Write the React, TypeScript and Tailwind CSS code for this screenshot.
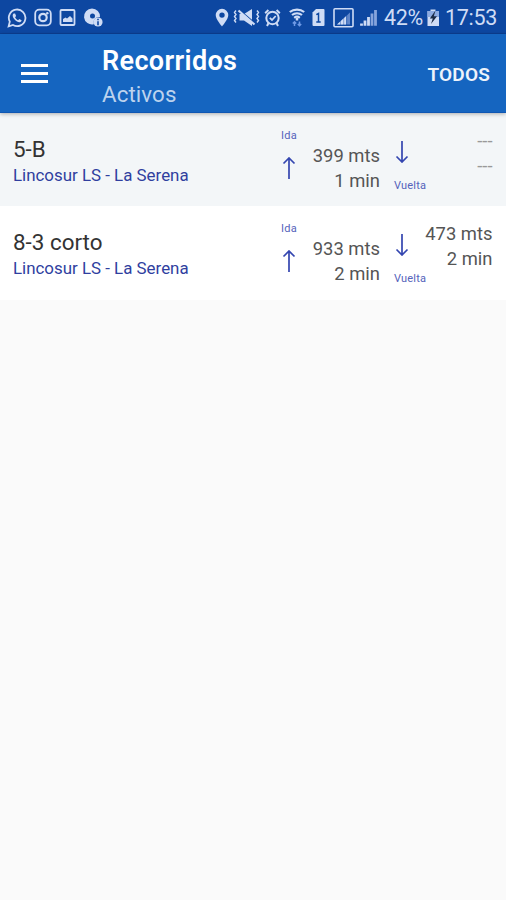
import type { ReactNode } from 'react'

type Reading = { distance: string; time: string }

type Route = {
  name: string
  company: string
  ida: Reading
  vuelta: Reading | null
}

const routes: Route[] = [
  {
    name: '5-B',
    company: 'Lincosur LS - La Serena',
    ida: { distance: '399 mts', time: '1 min' },
    vuelta: null,
  },
  {
    name: '8-3 corto',
    company: 'Lincosur LS - La Serena',
    ida: { distance: '933 mts', time: '2 min' },
    vuelta: { distance: '473 mts', time: '2 min' },
  },
]

function Icon({ w, h = 20, className = '', children }: { w: number; h?: number; className?: string; children: ReactNode }) {
  return (
    <svg
      width={w}
      height={h}
      viewBox={`0 0 ${w} ${h}`}
      className={`shrink-0 ${className}`}
      fill="none"
      stroke="currentColor"
      strokeWidth="1.8"
      aria-hidden="true"
    >
      {children}
    </svg>
  )
}

function StatusBar() {
  return (
    <div className="flex h-[34px] items-center border-b border-[#0b3f94] bg-[#0d47a1] pl-[7px] pt-[2px] text-[#cfdcf5]">
      {/* WhatsApp */}
      <Icon w={20}>
        <path d="M1.600 18.400l1.200-4.700a8.300 8.300 0 1 1 3.200 3.300z" />
        <path
          d="M6.600 5.400c-1.400 1-1.200 3 .4 5.300 1.700 2.300 4 3.700 5.800 3.500 1-.2 1.800-.9 1.800-2l-2.300-1.200-1.200 1.200c-1.300-.5-2.400-1.600-3-2.900l1-1.200-1-2.500z"
          fill="currentColor"
          stroke="none"
        />
      </Icon>
      {/* Instagram */}
      <Icon w={18} className="ml-[7px]">
        <rect x="1.200" y="1.700" width="15.600" height="15.600" rx="4" />
        <circle cx="9" cy="9.500" r="3.700" strokeWidth="2.200" />
        <circle cx="13.300" cy="5.200" r="1.200" fill="currentColor" stroke="none" />
      </Icon>
      {/* Gallery */}
      <Icon w={17} className="ml-[7px]">
        <rect x="1.500" y="2" width="14" height="15" rx="1" />
        <path d="M4 14v-3l2.500-1.500L8 10.500l3-2.500 2.500 2.500v3.500z" fill="currentColor" stroke="none" />
      </Icon>
      {/* Disc with alert badge */}
      <Icon w={21} className="ml-[7px]">
        <path
          d="M9 .5a8 8 0 1 0 1.800 15.800A5.500 5.500 0 0 1 17 9 8 8 0 0 0 9 .5zm.5 5a2.500 2.500 0 1 1 0 5 2.500 2.500 0 0 1 0-5z"
          fill="currentColor"
          fillRule="evenodd"
          stroke="none"
        />
        <circle cx="15" cy="14" r="4.600" fill="currentColor" stroke="none" />
        <path d="M15 10.800v1.400M15 13.300v4" stroke="#0d47a1" strokeWidth="1.600" />
      </Icon>

      <div className="w-[111px] shrink-0" />

      {/* Location */}
      <Icon w={14}>
        <path
          d="M7 .8A6.300 6.300 0 0 0 .7 7.100C.7 11.600 7 18.400 7 18.400s6.300-6.800 6.300-11.300A6.300 6.300 0 0 0 7 .8zm0 3.600a2.700 2.700 0 1 1 0 5.400 2.700 2.700 0 0 1 0-5.400z"
          fill="currentColor"
          fillRule="evenodd"
          stroke="none"
        />
      </Icon>
      {/* Vibrate, muted */}
      <Icon w={27} className="ml-[4px]">
        <path d="M3 2.500L1.500 4.500 3 6.500 1.500 8.500 3 10.500 1.500 12.500 3 14.500M24 2.500l1.500 2-1.500 2 1.500 2-1.500 2 1.500 2-1.500 2" strokeWidth="1.400" />
        <path d="M6.500 6h4.500L19 1v17L11 12.500H6.500z" fill="currentColor" stroke="none" />
        <path d="M8 3.300l13.500 11.500" stroke="#0d47a1" strokeWidth="1.200" />
        <path d="M5.500 2.500l16 14" strokeWidth="2.200" />
      </Icon>
      {/* Alarm */}
      <Icon w={17} className="ml-[4px]">
        <circle cx="8.500" cy="10" r="6.200" strokeWidth="2" />
        <path d="M1.200 5.200l3.200-3.200M15.800 5.200l-3.200-3.200M4.500 15L3 18M12.500 15L14 18" strokeWidth="2" />
        <path d="M5.800 9.800l2.200 2.200 3.700-4" />
      </Icon>
      {/* Wi-Fi */}
      <Icon w={16} className="ml-[8px]">
        <path d="M.8 4c4-3.300 10.400-3.300 14.400 0M3 7c2.900-2.300 7.100-2.300 10 0M5.200 9.800c1.700-1.300 3.900-1.300 5.600 0" strokeWidth="2.200" />
        <path d="M8 10v2.500" strokeWidth="2.500" />
        <path d="M5.500 18v-4M3.800 15.500l1.700-1.700 1.700 1.700M10.500 13.500v4M8.800 16l1.700 1.700 1.700-1.700" stroke="#6f9ae6" strokeWidth="1.500" />
      </Icon>
      {/* SIM 1 */}
      <Icon w={13} className="ml-[7px]">
        <path d="M4 1h7.500a1 1 0 0 1 1 1v15a1 1 0 0 1-1 1h-10a1 1 0 0 1-1-1V4.500z" fill="currentColor" stroke="none" />
        <path d="M4.300 6.700l2.200-1.200v8.500M4.300 14h4.400" stroke="#0d47a1" strokeWidth="1.500" />
      </Icon>
      {/* Boxed signal */}
      <Icon w={22} className="ml-[8px]">
        <rect x="1" y=".8" width="19" height="18" rx="1" strokeWidth="1.600" />
        <path d="M4 16.500l13-12v12z" fill="#5f86ca" stroke="none" />
        <path d="M4 16.500l9-8.300v8.300z" fill="currentColor" stroke="none" />
        <path d="M7.500 5v12M10.700 5v12M13.700 4v13" stroke="#0d47a1" strokeWidth=".4" />
      </Icon>
      {/* Signal */}
      <Icon w={18} className="ml-[5px]">
        <path d="M1.500 15.500v2.200M5 12.500v5.200M8.500 9v8.700" strokeWidth="2.800" />
        <path d="M12 5.500v12.200M15.500 2v15.700" stroke="#86a4dc" strokeWidth="2.800" />
      </Icon>

      <span className="ml-[6px] w-[39px] shrink-0 whitespace-nowrap text-[21.500px] leading-[24px] tracking-[-0.300px]">42%</span>
      {/* Battery charging */}
      <Icon w={12} className="ml-[4px]">
        <path d="M3.500 1.500h5V3H12v15H.5V3h3z" fill="currentColor" stroke="none" />
        <path d="M.5 3H12v6H.5z" fill="#8caae0" stroke="none" />
        <path d="M8.500 2.500L2.800 10.500h3L4 16l6-7.700H6.800z" fill="#1b2b45" stroke="none" />
      </Icon>
      <span className="ml-[6px] shrink-0 whitespace-nowrap text-[21.500px] leading-[24px] tracking-[-0.300px]">17:53</span>
    </div>
  )
}

function AppBar() {
  return (
    <header className="relative flex h-[79px] items-center border-b border-[#0f57b3] bg-[#1565c0] pl-[21px] pr-[16px] text-white shadow-[0_1px_4px_rgba(0,0,0,0.3)]">
      <button type="button" aria-label="Menú" className="flex w-[27px] flex-col gap-[5px]">
        <span className="h-[3px] bg-white" />
        <span className="h-[3px] bg-white" />
        <span className="h-[3px] bg-white" />
      </button>
      <div className="ml-[54px] flex-1 pt-[9px]">
        <h1 className="text-[27px] font-semibold leading-[34px] tracking-[0.350px]">Recorridos</h1>
        <p className="text-[22.300px] leading-[33px] tracking-[0.100px] text-[#bcd3ee]">Activos</p>
      </div>
      <button type="button" className="pt-[3px] text-[19px] font-semibold leading-[24px] tracking-[0.200px] text-[#edf3fb]">
        TODOS
      </button>
    </header>
  )
}

function Arrow({ down = false }: { down?: boolean }) {
  return (
    <svg width="14" height="22" viewBox="0 0 14 22" fill="none" stroke="#3446b0" strokeWidth="1.700" className="shrink-0" aria-hidden="true">
      {down ? <path d="M7 0v21M1.500 15.500L7 21l5.500-5.500" /> : <path d="M7 22V1M1.500 6.500L7 1l5.500 5.500" />}
    </svg>
  )
}

function Values({ reading }: { reading: Reading | null }) {
  return (
    <div className="flex flex-col items-end whitespace-nowrap text-[18.400px] leading-[25px] text-[#555]">
      {reading ? (
        <>
          <span>{reading.distance}</span>
          <span>{reading.time}</span>
        </>
      ) : (
        <>
          <span className="text-[#999]">---</span>
          <span className="text-[#999]">---</span>
        </>
      )}
    </div>
  )
}

function RouteRow({ route }: { route: Route }) {
  return (
    <li className="flex h-[93px] items-start bg-white pl-[13px] pr-[13.500px] odd:bg-[#f3f6f8] last:h-[94px]">
      <div className="w-[262px] shrink-0 pt-[22px]">
        <h2 className="text-[22.400px] leading-[28px] text-[#333]">{route.name}</h2>
        <p className="text-[16.900px] leading-[25px] text-[#303f9f]">{route.company}</p>
      </div>
      <div className="flex w-[28px] shrink-0 flex-col items-center pt-[16px]">
        <span className="text-[11px] leading-[14px] tracking-[0.300px] text-[#5563bb]">Ida</span>
        <div className="mt-[14px] flex">
          <Arrow />
        </div>
      </div>
      <div className="w-[77px] shrink-0 pt-[30px]">
        <Values reading={route.ida} />
      </div>
      <div className="ml-[14px] flex w-[30px] shrink-0 flex-col items-start whitespace-nowrap pt-[28px]">
        <div className="ml-px flex">
          <Arrow down />
        </div>
        <span className="mt-[16px] text-[11px] leading-[14px] tracking-[0.200px] text-[#5563bb]">Vuelta</span>
      </div>
      <div className="flex flex-1 justify-end pt-[15px]">
        <Values reading={route.vuelta} />
      </div>
    </li>
  )
}

export default function App() {
  return (
    <div className="h-[900px] w-[506px] overflow-hidden bg-[#fafafa] font-['Roboto',sans-serif]">
      <StatusBar />
      <AppBar />
      <ul>
        {routes.map((route) => (
          <RouteRow key={route.name} route={route} />
        ))}
      </ul>
    </div>
  )
}
